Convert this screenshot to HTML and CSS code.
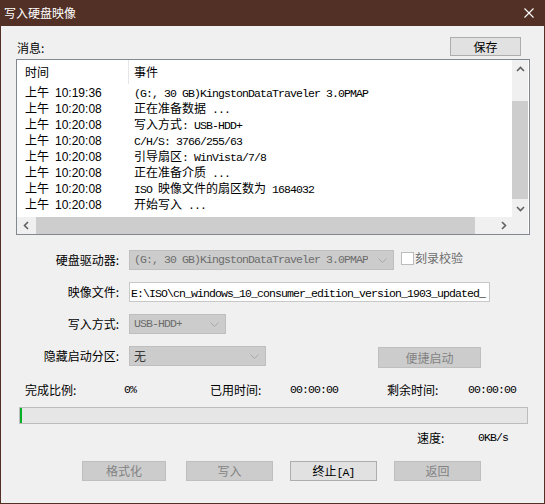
FILE: index.html
```html
<!DOCTYPE html>
<html lang="zh-CN">
<head>
<meta charset="utf-8">
<title>写入硬盘映像</title>
<link rel="stylesheet" href="styles.css">
</head>
<body>
<div class="window">
  <div class="titlebar">
    <span class="title">写入硬盘映像</span>
    <svg class="close" width="10" height="10" viewBox="0 0 10 10"><path d="M0.5 0.5L9.5 9.5M9.5 0.5L0.5 9.5" stroke="#fff" stroke-width="1.1" fill="none"/></svg>
  </div>
  <div class="content">
    <div class="msgbar">
      <span class="msglabel">消息:</span>
      <button class="btn btn-save">保存</button>
    </div>
    <div class="listbox">
      <div class="listmain">
        <div class="listview">
          <div class="lv-head"><div class="c-time">时间</div><div class="c-event">事件</div></div>
          <div class="lv-row"><div class="c-time">上午<span class="t">10:19:36</span></div><div class="c-event"><span class="m">(G:, 30 GB)KingstonDataTraveler 3.0PMAP</span></div></div>
          <div class="lv-row"><div class="c-time">上午<span class="t">10:20:08</span></div><div class="c-event">正在准备数据<span class="m"> ...</span></div></div>
          <div class="lv-row"><div class="c-time">上午<span class="t">10:20:08</span></div><div class="c-event">写入方式<span class="m">: USB-HDD+</span></div></div>
          <div class="lv-row"><div class="c-time">上午<span class="t">10:20:08</span></div><div class="c-event"><span class="m">C/H/S: 3766/255/63</span></div></div>
          <div class="lv-row"><div class="c-time">上午<span class="t">10:20:08</span></div><div class="c-event">引导扇区<span class="m">: WinVista/7/8</span></div></div>
          <div class="lv-row"><div class="c-time">上午<span class="t">10:20:08</span></div><div class="c-event">正在准备介质<span class="m"> ...</span></div></div>
          <div class="lv-row"><div class="c-time">上午<span class="t">10:20:08</span></div><div class="c-event"><span class="m">ISO </span>映像文件的扇区数为<span class="m"> 1684032</span></div></div>
          <div class="lv-row"><div class="c-time">上午<span class="t">10:20:08</span></div><div class="c-event">开始写入<span class="m"> ...</span></div></div>
        </div>
        <div class="vscroll">
          <div class="sarrow"><svg width="9" height="6" viewBox="0 0 9 6"><path d="M1 5L4.5 1.5L8 5" fill="none" stroke="#606060" stroke-width="1.6"/></svg></div>
          <div class="vtrack"><div class="vthumb"></div></div>
          <div class="sarrow"><svg width="9" height="6" viewBox="0 0 9 6"><path d="M1 1L4.5 4.5L8 1" fill="none" stroke="#606060" stroke-width="1.6"/></svg></div>
        </div>
      </div>
      <div class="hrow">
        <div class="hscroll">
          <div class="sarrow harrow"><svg width="6" height="9" viewBox="0 0 6 9"><path d="M5 1L1.5 4.5L5 8" fill="none" stroke="#606060" stroke-width="1.6"/></svg></div>
          <div class="htrack"><div class="hthumb"></div></div>
          <div class="sarrow harrow"><svg width="6" height="9" viewBox="0 0 6 9"><path d="M1 1L4.5 4.5L1 8" fill="none" stroke="#606060" stroke-width="1.6"/></svg></div>
        </div>
        <div class="corner"></div>
      </div>
    </div>

    <div class="form">
      <div class="flabel">硬盘驱动器:</div>
      <div class="fctl">
        <div class="combo combo-drive"><span class="m ctext">(G:, 30 GB)KingstonDataTraveler 3.0PMAP</span><svg width="9" height="5" viewBox="0 0 9 5"><path d="M0.5 0.5L4.5 4.5L8.5 0.5" fill="none" stroke="#a8a8a8" stroke-width="1"/></svg></div>
        <span class="checkbox"></span><span class="cblabel">刻录校验</span>
      </div>
      <div class="flabel">映像文件:</div>
      <div class="fctl">
        <div class="input"><span class="m">E:\ISO\cn_windows_10_consumer_edition_version_1903_updated_</span></div>
      </div>
      <div class="flabel">写入方式:</div>
      <div class="fctl">
        <div class="combo combo-mode"><span class="m ctext">USB-HDD+</span><svg width="9" height="5" viewBox="0 0 9 5"><path d="M0.5 0.5L4.5 4.5L8.5 0.5" fill="none" stroke="#a8a8a8" stroke-width="1"/></svg></div>
      </div>
      <div class="flabel">隐藏启动分区:</div>
      <div class="fctl">
        <div class="combo combo-hide"><span class="ctext dark">无</span><svg width="9" height="5" viewBox="0 0 9 5"><path d="M0.5 0.5L4.5 4.5L8.5 0.5" fill="none" stroke="#a8a8a8" stroke-width="1"/></svg></div>
        <button class="btn btn-disabled btn-quick">便捷启动</button>
      </div>
    </div>

    <div class="status">
      <span>完成比例:</span><span class="m">0%</span>
      <span>已用时间:</span><span class="m">00:00:00</span>
      <span>剩余时间:</span><span class="m">00:00:00</span>
    </div>

    <div class="progress"><div class="pfill" style="width: 2px"></div></div>

    <div class="speed"><span class="slabel">速度:</span><span class="m">0KB/s</span></div>

    <div class="actions">
      <button class="btn btn-disabled btn-w84">格式化</button>
      <button class="btn btn-disabled btn-w87 gap20">写入</button>
      <button class="btn btn-w87 gap17">终止<span class="m">[A]</span></button>
      <button class="btn btn-disabled btn-w87 gap17">返回</button>
    </div>
  </div>
</div>
</body>
</html>
```

FILE: styles.css
```css
* { box-sizing: border-box; }
html, body { margin: 0; padding: 0; }
body {
  width: 545px;
  height: 504px;
  overflow: hidden;
  background: #f0f0f0;
  font-family: "Noto Sans CJK SC", "Liberation Sans", sans-serif;
  font-size: 12px;
  color: #000;
}
.window {
  width: 545px;
  height: 504px;
  border: 1px solid #533026;
  border-top: 0;
  background: #f0f0f0;
}
.titlebar {
  height: 26px;
  background: #533026;
  color: #fff;
  display: flex;
  align-items: center;
  justify-content: space-between;
  padding: 0 10px 0 3px;
  line-height: 16px;
}
.close { display: block; }
.content { padding: 0 14px 0 15px; }

.m {
  font-family: "Liberation Mono", monospace;
  font-size: 11.5px;
  letter-spacing: -0.9px;
}

.btn {
  font-family: inherit;
  font-size: 12px;
  padding: 0;
  margin: 0;
  height: 20px;
  line-height: 18px;
  border: 1px solid #adadad;
  background: #e1e1e1;
  color: #000;
  text-align: center;
}
.btn-disabled {
  background: #cccccc;
  border-color: #bfbfbf;
  color: #838383;
}

.msgbar {
  height: 33px;
  display: flex;
  justify-content: space-between;
  align-items: flex-start;
}
.msglabel { margin-top: 14px; line-height: 16px; padding-left: 1px; }
.btn-save { margin-top: 11px; margin-right: 9px; width: 71px; height: 19px; line-height: 17px; }

.listbox {
  height: 176px;
  border: 1px solid #828790;
  background: #fff;
  padding-right: 1px;
  display: flex;
  flex-direction: column;
}
.listmain { height: 157px; display: flex; }
.listview { flex: 1; overflow: hidden; }
.lv-head { display: flex; height: 24px; line-height: 24px; }
.lv-head .c-time { border-right: 1px solid #e5e5e5; }
.lv-row { display: flex; height: 16px; line-height: 16px; white-space: pre; }
.c-time { width: 112px; padding-left: 8px; flex: none; }
.c-event { padding-left: 5px; white-space: pre; }
.t { font-family: "Liberation Sans", sans-serif; font-size: 12px; margin-left: 6px; }

.vscroll {
  width: 16px;
  background: #f0f0f0;
  display: flex;
  flex-direction: column;
}
.sarrow {
  height: 17px;
  display: flex;
  align-items: center;
  justify-content: center;
  flex: none;
}
.sarrow svg { display: block; }
.vtrack { flex: 1; padding-top: 24px; }
.vthumb { height: 98px; background: #cdcdcd; }

.hrow { height: 17px; display: flex; }
.hscroll { flex: 1; display: flex; background: #f0f0f0; }
.harrow { width: 17px; height: 17px; }
.htrack { flex: 1; padding-left: 2px; }
.hthumb { width: 439px; height: 17px; background: #cdcdcd; }
.corner { width: 16px; background: #f0f0f0; }

.form {
  margin-top: 15px;
  display: grid;
  grid-template-columns: 103px auto;
  column-gap: 10px;
  row-gap: 12px;
}
.flabel { text-align: right; line-height: 20px; white-space: nowrap; }
.fctl { display: flex; align-items: flex-start; min-height: 20px; }
.combo {
  height: 20px;
  border: 1px solid #bfbfbf;
  background: #cccccc;
  color: #6d6d6d;
  display: flex;
  align-items: center;
  justify-content: space-between;
  padding: 0 6px 0 4px;
  overflow: hidden;
  white-space: pre;
}
.combo svg { flex: none; display: block; }
.ctext { line-height: 18px; overflow: hidden; }
.dark { color: #3a3a3a; }
.combo-drive { width: 265px; }
.combo-mode { width: 97px; }
.combo-hide { width: 137px; }
.checkbox {
  width: 13px;
  height: 13px;
  margin: 2px 0 0 7px;
  border: 1px solid #bcbcbc;
  background: #fff;
  flex: none;
}
.cblabel { color: #6d6d6d; line-height: 16px; margin-left: 1px; }
.input {
  width: 361px;
  height: 20px;
  border: 1px solid #c8c8c8;
  background: #fff;
  padding-left: 1px;
  line-height: 18px;
  white-space: pre;
  overflow: hidden;
}
.btn-quick { width: 103px; margin: 1px 0 0 112px; height: 21px; line-height: 19px; }

.status {
  margin-top: 14px;
  display: grid;
  grid-template-columns: 99px 86px 80px 97px 81px auto;
  padding-left: 9px;
  line-height: 16px;
  height: 16px;
}
.progress {
  margin: 9px 0 0 3px;
  width: 509px;
  height: 17px;
  border: 1px solid #bcbcbc;
  background: #e6e6e6;
}
.pfill { height: 15px; background: #06b025; }
.speed {
  margin-top: 6px;
  display: flex;
  padding-left: 401px;
  line-height: 16px;
  height: 16px;
}
.slabel { width: 61px; }
.actions {
  margin-top: 15px;
  display: flex;
  padding-left: 66px;
}
.btn-w84 { width: 84px; }
.btn-w87 { width: 87px; }
.gap20 { margin-left: 20px; }
.gap17 { margin-left: 17px; }
```
